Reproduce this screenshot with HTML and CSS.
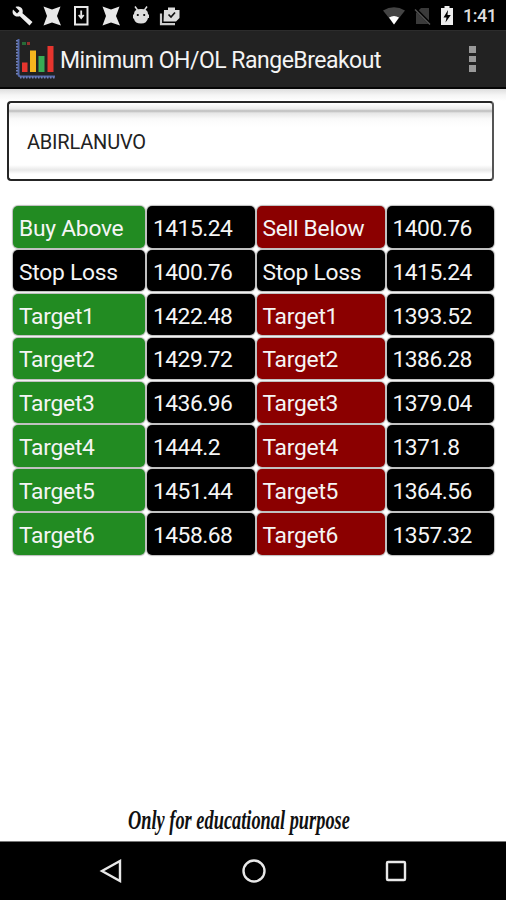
FILE: index.html
```
<!DOCTYPE html>
<html lang="en">
<head>
<meta charset="UTF-8">
<meta name="viewport" content="width=device-width, initial-scale=1.0">
<title>Minimum OH/OL RangeBreakout</title>
<link rel="stylesheet" href="styles.css">
</head>
<body>

<div class="status-bar">
    <div class="notifications">
        <svg width="22" height="22" viewBox="0 0 22 22"><path d="M2 4.5L6 8.5L8.5 6L4.5 2C8.5 .5 13 3.5 11.5 8.2L21.5 17L18.5 20.5L8.8 11.2C4 12.8 .3 9 2 4.5Z" fill="#eee"/></svg>
        <svg width="22" height="22" viewBox="0 0 22 22"><path d="M2.5 1.5L11 4.5L19.5 1.5L16 11L20 20.5L11 17.5L2.5 20.5L6 11Z" fill="#e8e8e8"/></svg>
        <svg width="22" height="22" viewBox="0 0 22 22"><rect x="5" y="2" width="12.5" height="17.5" fill="#000" stroke="#e8e8e8" stroke-width="2"/><path d="M11.2 5.5V12M8.7 10L11.2 13L13.7 10" fill="none" stroke="#e8e8e8" stroke-width="1.8"/></svg>
        <svg width="22" height="22" viewBox="0 0 22 22"><path d="M2.5 1.5L11 4.5L19.5 1.5L16 11L20 20.5L11 17.5L2.5 20.5L6 11Z" fill="#e8e8e8"/></svg>
        <svg width="22" height="22" viewBox="0 0 22 22"><path d="M5 1.5L7.5 5M17 1.5L14.5 5" stroke="#ddd" stroke-width="1.5"/><path d="M4 9Q4 4 11 4Q18 4 18 9L19 10V13H18Q17 18.5 11 18.5Q5 18.5 4 14L3 13V10Z" fill="#ddd"/><circle cx="7.8" cy="10" r="1.1"/><circle cx="14.2" cy="10" r="1.1"/></svg>
        <svg width="22" height="22" viewBox="0 0 22 22"><path d="M2 8.5V19.2H16" fill="none" stroke="#ccc" stroke-width="2.2"/><path d="M5 5H9V2.5H16V5H20.5V13L17 16.5H4.5Z" fill="#ddd"/><path d="M9.5 9.5L12 12L16 7.5" fill="none" stroke="#111" stroke-width="1.7"/></svg>
    </div>
    <div class="system">
        <svg width="22" height="20" viewBox="0 0 22 20"><path d="M0 4.5Q11-2 22 4.5L11 18.5Z" fill="#444"/><path d="M6 11.5Q11 8.5 16 11.5L11 18.5Z" fill="#fff"/></svg>
        <svg width="18" height="20" viewBox="0 0 18 20"><path d="M7 2H15V18H2V7Z" fill="#3a3a3a"/><path d="M1 2.5L17 18.5" stroke="#000" stroke-width="3"/><path d="M1 3.5L16 18.5" stroke="#555" stroke-width="1.4"/></svg>
        <svg width="12" height="20" viewBox="0 0 12 20"><path d="M3.5 0H8.5V2H12V19H0V2H3.5Z" fill="#eee"/><path d="M7 4L2.5 11.5H5.5L4.5 16.5L9.8 9H6.5Z"/></svg>
        <span class="clock">1:41</span>
    </div>
</div>

<div class="action-bar">
    <svg class="logo" width="40" height="40" viewBox="0 0 40 40">
        <path d="M3.5 0V35.5Q3.5 37.5 6 37.5H40" fill="none" stroke="#5368aa" stroke-width="2"/>
        <path d="M2 1V36M5 38.5H40" fill="none" stroke="#7080b8" stroke-width="2" stroke-dasharray="1.5 1.5"/>
        <path d="M7 3H11V6H7Z" fill="#276b37"/>
        <path d="M12 3H15V6H12Z" fill="#93302e"/>
        <path d="M7 23.5H12.5V33H7Z" fill="#e6352e"/>
        <path d="M15 11.5H21V33H15Z" fill="#f4b51e"/>
        <path d="M23.5 17H29.5V33H23.5Z" fill="#37ad55"/>
        <path d="M32.5 7H38.5V33H32.5Z" fill="#e6352e"/>
    </svg>
    <h1>Minimum OH/OL RangeBreakout</h1>
    <div class="overflow"><i></i><i></i><i></i></div>
</div>

<div class="content">
    <div class="symbol">ABIRLANUVO</div>

    <div class="levels">
        <div class="buy">Buy Above</div><div>1415.24</div><div class="sell">Sell Below</div><div>1400.76</div>
        <div>Stop Loss</div><div>1400.76</div><div>Stop Loss</div><div>1415.24</div>
        <div class="buy">Target1</div><div>1422.48</div><div class="sell">Target1</div><div>1393.52</div>
        <div class="buy">Target2</div><div>1429.72</div><div class="sell">Target2</div><div>1386.28</div>
        <div class="buy">Target3</div><div>1436.96</div><div class="sell">Target3</div><div>1379.04</div>
        <div class="buy">Target4</div><div>1444.2</div><div class="sell">Target4</div><div>1371.8</div>
        <div class="buy">Target5</div><div>1451.44</div><div class="sell">Target5</div><div>1364.56</div>
        <div class="buy">Target6</div><div>1458.68</div><div class="sell">Target6</div><div>1357.32</div>
    </div>

    <p class="note"><span>Only for educational purpose</span></p>
</div>

<div class="nav-bar">
    <svg width="24" height="24" viewBox="0 0 24 24"><path d="M21 2V22L3 12Z"/></svg>
    <svg width="24" height="24" viewBox="0 0 24 24"><circle cx="12" cy="12" r="10.5"/></svg>
    <svg width="24" height="24" viewBox="0 0 24 24"><rect x="3" y="3" width="18" height="18" rx="1"/></svg>
</div>

</body>
</html>
```
FILE: styles.css
```
* {
    box-sizing: border-box;
}
body {
    margin: 0;
    height: 900px;
    display: flex;
    flex-direction: column;
    font-family: Roboto, sans-serif;
    background-color: #fff;
    overflow: hidden;
}
svg {
    display: block;
    flex: none;
}
.status-bar {
    height: 30px;
    padding: 1px 11px 0 11px;
    display: flex;
    align-items: center;
    justify-content: space-between;
    background-color: #000;
}
.notifications {
    display: flex;
    gap: 7.7px;
}
.system {
    display: flex;
    align-items: center;
}
.system svg:nth-child(1) {
    margin-right: 9px;
}
.system svg:nth-child(3) {
    margin-left: 9px;
}
.clock {
    width: 32px;
    margin-left: 10px;
    color: #ddd;
    font-size: 18px;
    font-weight: 500;
    letter-spacing: -0.5px;
    white-space: nowrap;
}
.action-bar {
    height: 59px;
    padding: 0 30px 0 15px;
    display: flex;
    align-items: center;
    background-color: #222;
    border-top: 1px solid #2c2c2c;
    border-bottom: 2px solid #050505;
}
.action-bar h1 {
    flex: 1;
    margin: 3px 0 0 5px;
    color: #f4f4f4;
    font-size: 23px;
    font-weight: 400;
    letter-spacing: -0.5px;
    white-space: nowrap;
}
.overflow {
    width: 7px;
    display: grid;
    gap: 3px;
}
.overflow i {
    height: 6.5px;
    background-color: #999;
}
.content {
    flex: 1;
    padding: 12px 7px 0;
    display: flex;
    flex-direction: column;
    background: linear-gradient(#dedede, #f5f5f5 6px, #fff 12px);
}
.symbol {
    height: 80px;
    margin-right: 5px;
    padding: 1px 18px 0;
    display: flex;
    align-items: center;
    border: 2px solid #252525;
    border-right-color: #555;
    border-radius: 4px;
    background: linear-gradient(#fff, #e8e8e8 6px, #bbb 8px, #e6e6e6 10px, #fafafa 16px, #fff 24px, #fff 62px, #e9e9e9 67px, #fff 71px);
    color: #222;
    font-size: 20px;
    font-weight: 400;
    letter-spacing: -0.2px;
}
.levels {
    margin: 25px 5px 0 6px;
    display: grid;
    grid-template-columns: 132px 107.5px 128px 107.5px;
    grid-auto-rows: 41.5px;
    column-gap: 2px;
    row-gap: 2.4px;
}
.levels div {
    padding: 3px 0 0 6px;
    display: flex;
    align-items: center;
    background-color: #000;
    border-radius: 5px;
    box-shadow: 0 0 1px 1px #bbb;
    color: #f5f5f5;
    font-size: 22.8px;
    letter-spacing: -0.5px;
    white-space: nowrap;
}
.levels div:nth-child(odd) {
    letter-spacing: -0.25px;
}
.levels .buy {
    background-color: #228b22;
}
.levels .sell {
    background-color: #8b0000;
}
.note {
    margin: auto 0 4px 121px;
    color: #111;
    font-family: "Brush Script MT", "Liberation Serif", serif;
    font-size: 27px;
    font-style: italic;
    font-weight: 700;
    line-height: 34px;
    white-space: nowrap;
}
.note span {
    display: inline-block;
    transform: scaleX(0.68);
    transform-origin: left;
}
.nav-bar {
    height: 59px;
    padding: 0 98px 0 99px;
    display: flex;
    align-items: center;
    justify-content: space-between;
    background-color: #000;
    border-top: 1px solid #777;
}
.nav-bar svg {
    fill: none;
    stroke: #e8e8e8;
    stroke-width: 2.4;
}
```
